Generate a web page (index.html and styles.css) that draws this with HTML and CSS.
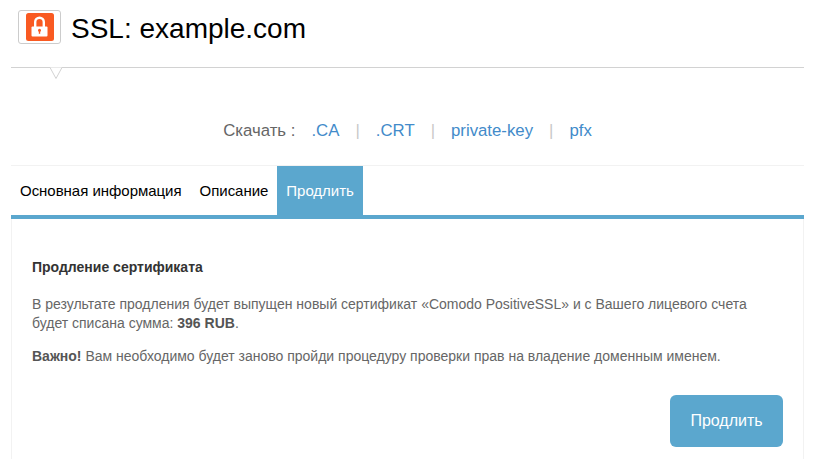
FILE: index.html
```html
<!DOCTYPE html>
<html lang="ru">
<head>
<meta charset="utf-8">
<title>SSL: example.com</title>
<link rel="stylesheet" href="styles.css">
</head>
<body>
<div class="page">
  <header class="head">
    <span class="logo">
      <svg width="28" height="28" viewBox="0 0 28 28">
        <rect width="28" height="28" rx="2.5" fill="#f95a22"/>
        <path d="M9.2 14V9a4.3 4.3 0 0 1 8.6 0V14" fill="none" stroke="#fff" stroke-width="2.4"/>
        <rect x="5.5" y="13.5" width="16" height="10" rx="1" fill="#fff"/>
        <circle cx="13.5" cy="17.2" r="1.5" fill="#f95a22"/>
        <rect x="12.8" y="17.2" width="1.4" height="3.6" fill="#f95a22"/>
      </svg>
    </span>
    <h1 class="title">SSL: example.com</h1>
  </header>
  <div class="rule">
    <svg class="notch" width="16" height="13" viewBox="0 0 16 13">
      <path d="M0 .5H2L8 11.5 14 .5H16" fill="#fff" stroke="#d2d2d2"/>
    </svg>
  </div>
  <p class="downloads">
    <span class="dl-label">Скачать :</span>
    <a class="dl-link" href="#">.CA</a><span class="sep">|</span>
    <a class="dl-link" href="#">.CRT</a><span class="sep">|</span>
    <a class="dl-link" href="#">private-key</a><span class="sep">|</span>
    <a class="dl-link" href="#">pfx</a>
  </p>
  <nav class="tabs">
    <a class="tab" href="#">Основная информация</a>
    <a class="tab" href="#">Описание</a>
    <a class="tab active" href="#">Продлить</a>
  </nav>
  <section class="panel">
    <h2 class="panel-title">Продление сертификата</h2>
    <p class="text">В результате продления будет выпущен новый сертификат «Comodo PositiveSSL» и с Вашего лицевого счета будет списана сумма: <b>396 RUB</b>.</p>
    <p class="text"><b>Важно!</b> Вам необходимо будет заново пройди процедуру проверки прав на владение доменным именем.</p>
    <div class="actions"><a class="btn" href="#">Продлить</a></div>
  </section>
</div>
</body>
</html>
```
FILE: styles.css
```css
* { box-sizing: border-box; }
html, body { margin: 0; padding: 0; background: #fff; }
body { font-family: "Liberation Sans", Arial, sans-serif; overflow: hidden; height: 459px; }
a { text-decoration: none; }
.page { margin: 0 14px 0 11px; }
.head { display: flex; align-items: flex-start; height: 67px; padding: 10px 0 0 7px; }
.logo { width: 43px; height: 34px; border: 1px solid #ccc; border-radius: 3px; display: flex; align-items: center; justify-content: center; background: #fff; }
.logo svg { width: 28px; height: 28px; }
.title { margin: 1px 0 0 10px; font-size: 28px; font-weight: 400; color: #000; line-height: 36px; }
.rule { height: 1px; background: #d2d2d2; position: relative; }
.notch { position: absolute; left: 37px; top: 0; display: block; }
.downloads { margin: 0; height: 97px; display: flex; align-items: center; justify-content: center; padding: 29px 0 0 0; font-size: 16.8px; line-height: 20px; color: #666; }
.dl-label { margin-right: 16px; }
.dl-link { color: #428bca; }
.sep { color: #c9c9c9; margin: 0 16px; }
.tabs { display: flex; height: 54px; border-top: 1px solid #f2f2f2; border-bottom: 4px solid #5ba7ce; }
.tab { display: block; height: 49px; padding: 0 9px; line-height: 49px; font-size: 15px; letter-spacing: -0.03px; color: #000; }
.active { background: #5ba7ce; color: #fff; }
.panel { height: 242px; border-left: 1px solid #f2f2f2; border-right: 1px solid #f2f2f2; padding: 40px 20px 0 20px; font-size: 14px; }
.panel-title { margin: 0 0 19.6px; font-size: 14px; line-height: 16px; font-weight: 700; color: #333; }
.text { margin: 0 0 13px; font-size: 14px; line-height: 19.6px; color: #666; }
.text b { color: #555; }
.actions { display: flex; justify-content: flex-end; margin-top: 28.4px; }
.btn { display: block; width: 113px; height: 52px; line-height: 52px; text-align: center; border-radius: 6px; background: #5ba7ce; color: #fff; font-size: 16px; }
```
